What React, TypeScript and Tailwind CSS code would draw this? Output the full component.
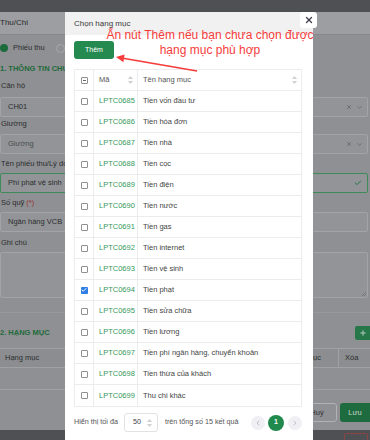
import { X, ChevronLeft, ChevronRight, ChevronDown, Check, Plus } from "lucide-react"

const items = [
  { code: "LPTC0685", name: "Tiền vốn đầu tư" },
  { code: "LPTC0686", name: "Tiền hóa đơn" },
  { code: "LPTC0687", name: "Tiền nhà" },
  { code: "LPTC0688", name: "Tiền cọc" },
  { code: "LPTC0689", name: "Tiền điện" },
  { code: "LPTC0690", name: "Tiền nước" },
  { code: "LPTC0691", name: "Tiền gas" },
  { code: "LPTC0692", name: "Tiền internet" },
  { code: "LPTC0693", name: "Tiền vệ sinh" },
  { code: "LPTC0694", name: "Tiền phạt", checked: true },
  { code: "LPTC0695", name: "Tiền sửa chữa" },
  { code: "LPTC0696", name: "Tiền lương" },
  { code: "LPTC0697", name: "Tiền phí ngân hàng, chuyển khoản" },
  { code: "LPTC0698", name: "Tiền thừa của khách" },
  { code: "LPTC0699", name: "Thu chi khác" },
]

function SortIcon() {
  return (
    <svg width="5" height="8" viewBox="0 0 5 8" className="shrink-0">
      <polygon points="2.5,0 5,3 0,3" fill="#cfcfd4" />
      <polygon points="0,5 5,5 2.5,8" fill="#cfcfd4" />
    </svg>
  )
}

function Checkbox({ checked }: { checked?: boolean }) {
  if (checked) {
    return (
      <span className="flex h-[7px] w-[7px] items-center justify-center rounded-[1px] bg-[#2f7ee6]">
        <Check size={6} strokeWidth={4} color="white" />
      </span>
    )
  }
  return <span className="block h-[7px] w-[7px] rounded-[1px] border border-[#8f8f8f] bg-white" />
}

function Label({ children, className = "" }: { children: React.ReactNode; className?: string }) {
  return <div className={`flex h-[10px] items-center pl-[1px] text-[7.5px] text-[#2c2d2f] ${className}`}>{children}</div>
}

function SelectField({ value, muted }: { value: string; muted?: boolean }) {
  return (
    <div className="mt-[6px] flex h-[20px] w-[368px] items-center rounded-[2px] border border-[#a2a4a7] bg-[#929497] pl-[7px] pr-[4px] text-[7.5px]">
      <span className={muted ? "text-[#4a4c4f]" : "text-[#2c2d2f]"}>{value}</span>
      <span className="ml-auto flex items-center gap-[4px] text-[#55575a]">
        <X size={6} strokeWidth={2.5} />
        <ChevronDown size={7} strokeWidth={2} />
      </span>
    </div>
  )
}

function Background() {
  return (
    <div className="flex h-full w-full flex-col bg-[#8e9093] text-[#2c2d2f]">
      <div className="h-[12px] bg-[#4e5053]" />
      <div className="flex h-[23px] items-center border-b border-[#858789] bg-[#9c9ea1] text-[8px] text-[#2a2b2d]">
        Thu/Chi
      </div>

      <div className="mt-[8px] flex h-[10px] items-center text-[7.5px]">
        <span className="h-[8px] w-[8px] rounded-full bg-[#1d6a3d]" />
        <span className="ml-[5px]">Phiếu thu</span>
        <span className="ml-[11px] h-[9px] w-[9px] rounded-full border border-[#a6a8ab]" />
        <span className="ml-[4px]">Phiếu chi</span>
      </div>

      <div className="mt-[11px] flex h-[10px] items-center text-[7.5px] font-bold text-[#1f6a3c]">
        1. THÔNG TIN CHUNG
      </div>

      <Label className="mt-[7px]">Căn hộ</Label>
      <SelectField value="CH01" />

      <Label className="mt-[2px]">Giường</Label>
      <div className="-mt-[1px]">
        <SelectField value="Giường" muted />
      </div>

      <Label className="mt-[5px]">Tên phiếu thu/Lý do</Label>
      <div className="mt-[4px] flex h-[20px] w-[368px] items-center rounded-[2px] border border-[#3f8a5b] bg-[#929497] pl-[7px] pr-[5px] text-[7.5px]">
        Phí phạt vệ sinh
        <Check size={8} strokeWidth={3} className="ml-auto text-[#1f7a45]" />
      </div>

      <Label className="mt-[5px]">
        Số quỹ <span className="ml-[2px] text-[#9a2f2f]">(*)</span>
      </Label>
      <div className="mt-[4px] flex h-[20px] w-[368px] items-center rounded-[2px] border border-[#a2a4a7] bg-[#929497] pl-[7px] text-[7.5px]">
        Ngân hàng VCB
      </div>

      <Label className="mt-[6px]">Ghi chú</Label>
      <div className="relative mt-[4px] h-[46px] w-[368px] rounded-[2px] border border-[#a2a4a7] bg-[#929497]">
        <svg width="5" height="5" viewBox="0 0 5 5" className="absolute bottom-[1px] right-[1px]">
          <path d="M1 5 L5 1 M3 5 L5 3" stroke="#6c6e71" strokeWidth="0.8" />
        </svg>
      </div>

      <div className="mt-[14px] h-px bg-[#97999c]" />

      <div className="mt-[13px] flex h-[14px] items-center text-[7.5px] font-bold text-[#1f6a3c]">
        2. HẠNG MỤC
        <span className="ml-auto flex h-[14px] w-[15px] items-center justify-center rounded-l-[2px] bg-[#26784a]">
          <Plus size={8} strokeWidth={2.5} color="#c9d6ce" />
        </span>
      </div>

      <div className="mt-[8px] flex h-[20px] items-center border-y border-[#9fa1a4] bg-[#8b8d90] text-[7.5px]">
        <span className="w-[240px] pl-[5px]">Hạng mục</span>
        <span className="flex h-full w-[99px] items-center justify-end border-r border-[#9fa1a4] pr-[17px]">Nội dung mục</span>
        <span className="pl-[6px]">Xóa</span>
      </div>
      <div className="h-[22px] border-b border-[#9fa1a4]" />

      <div className="mt-[13px] flex h-[19px] justify-end gap-[3px] text-[7.5px]">
        <span className="flex w-[40px] items-center justify-center rounded-[3px] border border-[#b0b2b5] text-[#2e2f31]">Huỷ</span>
        <span className="flex w-[30px] items-center justify-center rounded-l-[3px] bg-[#1e6b40] text-[#c6d3cb]">Lưu</span>
      </div>

      <div className="mt-[8px] flex h-[10px] justify-end bg-[#4e5053] pr-[2px] pt-[3px]">
        <span className="h-[10px] w-[24px] rounded-[2px] border border-[#8a4444]" />
      </div>
    </div>
  )
}

function Modal() {
  return (
    <div className="absolute bottom-0 left-[65px] top-[12px] flex w-[248px] flex-col bg-white text-[#333]">
      <div className="flex h-[23px] shrink-0 items-center bg-[#f1f1f1] pl-[9px] text-[8px] text-[#3a3a3a]">
        Chọn hạng mục
      </div>
      <div className="flex flex-col pl-[9px] pr-[11px]">
        <button className="mt-[6px] flex h-[18px] w-[40px] items-center justify-center rounded-[3px] bg-[#248a4f] text-[7px] font-medium text-white">
          Thêm
        </button>

        <div className="mt-[10px] border border-[#ececec] text-[7.5px]">
          <div className="flex h-[21px] border-b border-[#ececec] text-[#555]">
            <div className="flex w-[19px] items-center justify-center border-r border-[#ececec]">
              <span className="flex h-[7px] w-[7px] items-center justify-center rounded-[1px] border border-[#8f8f8f]">
                <span className="h-px w-[3px] bg-[#666]" />
              </span>
            </div>
            <div className="flex w-[44px] items-center border-r border-[#ececec] pl-[5px] pr-[4px]">
              Mã
              <span className="ml-auto">
                <SortIcon />
              </span>
            </div>
            <div className="flex flex-1 items-center pl-[5px] pr-[4px]">
              Tên hạng mục
              <span className="ml-auto">
                <SortIcon />
              </span>
            </div>
          </div>
          {items.map((item, i) => (
            <div key={item.code} className={`flex h-[21px] ${i < items.length - 1 ? "border-b border-[#ececec]" : ""}`}>
              <div className="flex w-[19px] items-center justify-center border-r border-[#ececec]">
                <Checkbox checked={item.checked} />
              </div>
              <div className="flex w-[44px] items-center border-r border-[#ececec] pl-[5px] text-[#34995b]">{item.code}</div>
              <div className="flex flex-1 items-center pl-[5px] text-[#444]">{item.name}</div>
            </div>
          ))}
        </div>

        <div className="mt-[6px] flex h-[19px] items-center text-[7.2px] text-[#555]">
          <span>Hiển thị tối đa</span>
          <div className="ml-[6px] flex h-[19px] w-[34px] items-center rounded-[3px] border border-[#e2e2e2] pl-[8px] pr-[5px]">
            <span className="text-[#444]">50</span>
            <span className="ml-auto">
              <SortIcon />
            </span>
          </div>
          <span className="ml-[7px]">trên tổng số 15 kết quả</span>
          <div className="ml-auto flex items-center">
            <span className="flex h-[14px] w-[14px] items-center justify-center rounded-full bg-[#efeff4] text-[#a9a9b3]">
              <ChevronLeft size={8} strokeWidth={2} />
            </span>
            <span className="ml-[3px] flex h-[16px] w-[16px] items-center justify-center rounded-full bg-[#1f8a4c] text-[7px] font-bold text-white">
              1
            </span>
            <span className="ml-[4px] flex h-[14px] w-[14px] items-center justify-center rounded-full bg-[#efeff4] text-[#a9a9b3]">
              <ChevronRight size={8} strokeWidth={2} />
            </span>
          </div>
        </div>
      </div>
    </div>
  )
}

export default function App() {
  return (
    <div className="relative h-[440px] w-[370px] overflow-hidden font-['Liberation_Sans',Arial,sans-serif]">
      <Background />
      <Modal />

      {/* close button */}
      <button className="absolute left-[300px] top-[12px] flex h-[16px] w-[17px] items-center justify-center rounded-[3px] bg-white text-[#3d3d4a]">
        <X size={10} strokeWidth={3} />
      </button>

      {/* annotation */}
      <div className="pointer-events-none absolute left-[100px] top-[28px] w-[220px] text-center text-[12px] leading-[15px] text-[#f63b3b]">
        Ấn nút Thêm nếu bạn chưa chọn được
        <br />
        hạng mục phù hợp
      </div>
      <svg className="pointer-events-none absolute left-0 top-0" width="370" height="440">
        <line x1="197" y1="71" x2="123" y2="58.3" stroke="#f63b3b" strokeWidth="1.6" />
        <polygon points="116,57 124.6,54.4 123.4,62.2" fill="#f63b3b" />
      </svg>
    </div>
  )
}
